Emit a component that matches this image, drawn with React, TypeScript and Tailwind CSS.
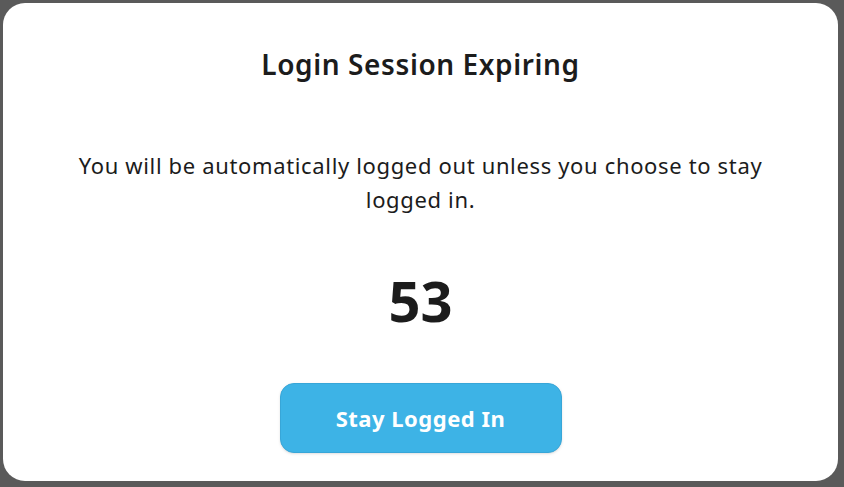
import React from 'react';

export default function App() {
  return (
    <div className="w-[844px] h-[487px] bg-[#5a5a5a] pt-[3px] pl-[3px] pr-[6px] pb-[6px] font-['Noto_Sans','Open_Sans',sans-serif]">
      <div className="w-full h-full bg-white rounded-[22px] flex flex-col items-center text-[#1c1c1c]">
        <h2 className="mt-[44px] text-[28px] leading-[34px] font-semibold tracking-[0.6px]">Login Session Expiring</h2>
        <p className="mt-[67px] w-[720px] text-center text-[22px] leading-[34px] tracking-[0.65px]">
          You will be automatically logged out unless you choose to stay logged in.
        </p>
        <div className="mt-[52px] text-[56px] leading-[64px] font-bold">53</div>
        <button
          type="button"
          className="mt-[51px] w-[282px] h-[70px] rounded-[14px] bg-[#3db3e6] border border-[#38a6d8] text-white text-[22px] font-bold tracking-[0.5px] shadow-sm"
        >
          Stay Logged In
        </button>
      </div>
    </div>
  );
}
